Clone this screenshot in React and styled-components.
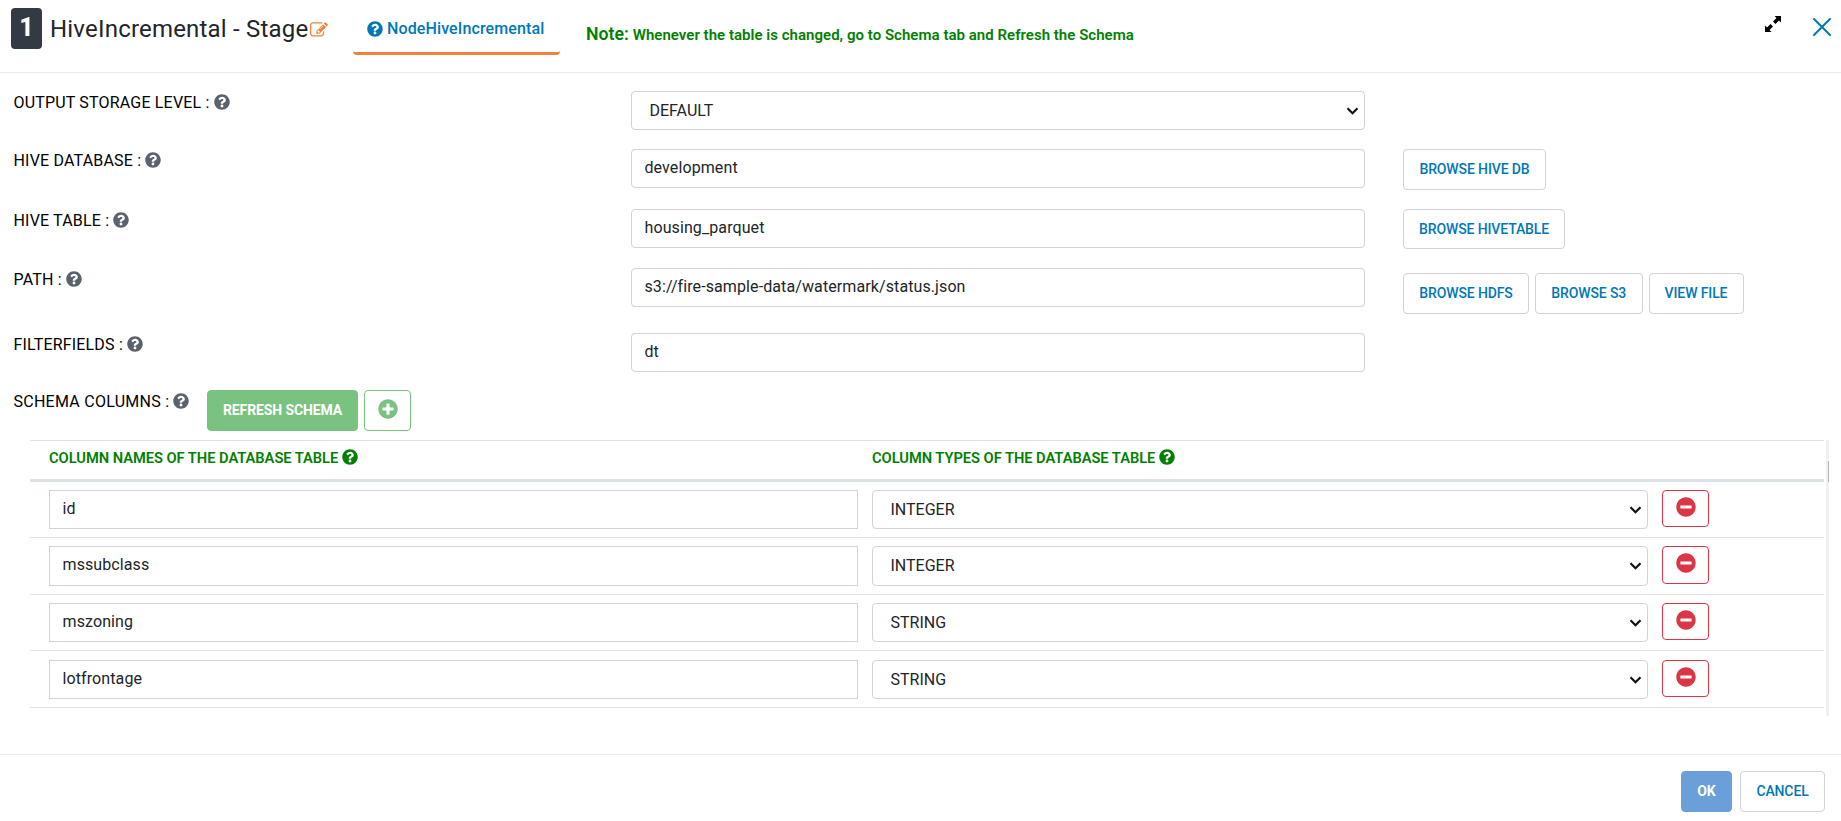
import React from "react";
import styled, { createGlobalStyle, css } from "styled-components";
import { FaQuestionCircle, FaPlusCircle, FaMinusCircle } from "react-icons/fa";

const GlobalStyle = createGlobalStyle`
  *, *::before, *::after { box-sizing: border-box; }
  body { margin: 0; background: #fff; }
  button, input, select { font: inherit; margin: 0; }
`;

const Dialog = styled.div`
  display: flex;
  flex-direction: column;
  height: 821px;
  overflow: hidden;
  background: #fff;
  color: #212529;
  font-family: Roboto, "Liberation Sans", sans-serif;
  font-size: 16px;
  line-height: 24px;
`;

const Header = styled.header`
  display: flex;
  align-items: flex-start;
  flex: none;
  height: 73px;
  padding: 8px 10px 0 11px;
  border-bottom: 1px solid #e9ebed;
`;

const StepBadge = styled.span`
  flex: none;
  width: 31px;
  height: 41px;
  border-radius: 4px;
  background: #343a43;
  color: #fff;
  font-size: 25px;
  font-weight: 800;
  line-height: 40px;
  text-align: center;
`;

const Title = styled.h4`
  flex: none;
  width: 258px;
  margin: 1px 0 0 8px;
  font-size: 24px;
  font-weight: 400;
  line-height: 40px;
  letter-spacing: 0.2px;
  white-space: nowrap;
`;

const EditIcon = styled.svg`
  flex: none;
  width: 18px;
  height: 18px;
  margin-top: 13px;
  margin-left: 2px;
  fill: #f0803c;
`;

const Tab = styled.a`
  display: flex;
  align-items: center;
  flex: none;
  gap: 4px;
  width: 207px;
  height: 47px;
  margin-left: 25px;
  padding: 0 0 2px 14px;
  border-bottom: 3px solid #f5813f;
  border-radius: 4px;
  color: #0078b8;
  font-weight: 500;
  letter-spacing: 0.12px;
  white-space: nowrap;
  svg { margin-bottom: 1px; }
`;

const Note = styled.p`
  flex: 1;
  margin: 14px 0 0 26px;
  color: #008000;
  font-size: 15px;
  font-weight: 600;
  letter-spacing: 0.03px;
  white-space: nowrap;
`;

const NoteLead = styled.span`
  font-size: 17.7px;
`;

const HeaderIcon = styled.svg`
  flex: none;
  width: ${(p) => p.$size}px;
  height: ${(p) => p.$size}px;
  margin-top: ${(p) => p.$top}px;
  margin-left: ${(p) => p.$gap || 0}px;
`;

const Form = styled.main`
  flex: 1;
  padding-top: 18px;
`;

const FieldRow = styled.div`
  display: grid;
  grid-template-columns: 617.5px 734px 1fr;
  align-items: start;
  height: ${(p) => p.$height}px;
  padding-left: 13.5px;
`;

const Label = styled.label`
  display: flex;
  align-items: center;
  gap: 4px;
  height: 24px;
  color: #000;
  letter-spacing: 0.18px;
  white-space: nowrap;
  svg { color: #5a636d; margin-bottom: 3px; }
`;

const control = css`
  display: block;
  width: 100%;
  height: ${(p) => p.$height || 39}px;
  border: 1px solid #ced4da;
  background: #fff;
  color: #212529;
  outline: none;
`;

const TextInput = styled.input`
  ${control}
  padding: 0 12.5px 3px;
  border-radius: ${(p) => (p.$square ? 0 : 4)}px;
  letter-spacing: 0.1px;
`;

const SelectWrap = styled.div`
  ${control}
  display: flex;
  align-items: center;
  justify-content: space-between;
  padding: 0 5px 0 17.5px;
  border-radius: 4px;
`;

const Chevron = styled.svg`
  width: 13px;
  height: 8px;
  fill: none;
  stroke: #111;
  stroke-width: 2.2;
`;

const Actions = styled.div`
  display: flex;
  gap: 6px;
  padding: ${(p) => p.$top || 0}px 0 0 38px;
`;

const Button = styled.button`
  flex: none;
  display: flex;
  align-items: center;
  justify-content: center;
  width: ${(p) => p.$width}px;
  height: ${(p) => p.$height || 41}px;
  padding: 0 0 ${(p) => (p.$height === 40 ? 0 : 2)}px;
  border: 1px solid ${(p) => p.$border || "#ced4da"};
  border-radius: 4px;
  background: ${(p) => p.$fill || "#fff"};
  color: ${(p) => p.$color || "#0078b8"};
  font-size: 14px;
  font-weight: ${(p) => (p.$fill ? 700 : 500)};
  letter-spacing: -0.12px;
  white-space: nowrap;
  svg { margin-bottom: 2px; }
`;

const SchemaBar = styled.div`
  display: flex;
  align-items: flex-start;
  gap: 6px;
  height: 50px;
  padding-left: 13.5px;
`;

const SchemaLabel = styled(Label)`
  width: 187.5px;
  letter-spacing: 0.26px;
`;

const TableScroller = styled.div`
  display: flex;
  gap: 2px;
  height: 276px;
  padding-left: 30px;
`;

const Table = styled.div`
  width: 1794px;
`;

const TableHead = styled.div`
  display: grid;
  grid-template-columns: 823px 1fr;
  height: 42px;
  padding: 5px 0 0 19px;
  border-top: 1px solid #dee2e6;
  border-bottom: 3px solid #dee2e6;
`;

const HeadCell = styled.span`
  display: flex;
  align-items: center;
  gap: 4px;
  height: 24px;
  color: #008000;
  font-size: 14.7px;
  font-weight: 600;
  letter-spacing: -0.04px;
  white-space: nowrap;
  svg { margin-bottom: 2px; }
`;

const TableRow = styled.div`
  display: grid;
  grid-template-columns: 809px 776px 47px;
  column-gap: 14px;
  height: ${(p) => p.$height}px;
  padding: ${(p) => p.$top || 8}px 0 0 19px;
  border-bottom: 1px solid #dee2e6;
`;

const ScrollTrack = styled.div`
  display: flex;
  justify-content: flex-end;
  width: 3px;
  padding-top: 21px;
  background: #f0f0f0;
`;

const ScrollThumb = styled.div`
  width: 1px;
  height: 21px;
  background: #b4b4b4;
`;

const Footer = styled.footer`
  display: flex;
  justify-content: flex-end;
  gap: 8px;
  flex: none;
  height: 67px;
  padding: 16px 16px 0 0;
  border-top: 1px solid #e9ecef;
`;

const fields = [
  { label: "OUTPUT STORAGE LEVEL :", value: "DEFAULT", select: true, height: 58 },
  { label: "HIVE DATABASE :", value: "development", height: 60, actions: [["BROWSE HIVE DB", 143]] },
  { label: "HIVE TABLE :", value: "housing_parquet", height: 59, actions: [["BROWSE HIVETABLE", 162]], buttonHeight: 40 },
  {
    label: "PATH :",
    value: "s3://fire-sample-data/watermark/status.json",
    height: 65,
    actionsTop: 5,
    actions: [["BROWSE HDFS", 126], ["BROWSE S3", 107.5], ["VIEW FILE", 95]],
  },
  { label: "FILTERFIELDS :", value: "dt", height: 57 },
];

const columns = [
  { name: "id", type: "INTEGER", height: 56 },
  { name: "mssubclass", type: "INTEGER", height: 57, control: 40, button: 38 },
  { name: "mszoning", type: "STRING", height: 56 },
  { name: "lotfrontage", type: "STRING", height: 57, top: 9 },
];

function Select({ value, height }) {
  return (
    <SelectWrap role="combobox" $height={height}>
      <span>{value}</span>
      <Chevron viewBox="0 0 13 8">
        <path d="M1.5 1.2 6.5 6.2 11.5 1.2" />
      </Chevron>
    </SelectWrap>
  );
}

export default function App() {
  return (
    <Dialog>
      <GlobalStyle />
      <Header>
        <StepBadge>1</StepBadge>
        <Title>HiveIncremental - Stage</Title>
        <EditIcon viewBox="0 0 1792 1792">
          <path d="M888 1184l116-116-152-152-116 116v56h96v96h56zm440-720q-16-16-33 1l-350 350q-17 17-1 33t33-1l350-350q17-17 1-33zm80 594v190q0 119-84.500 203.500t-203.500 84.500h-832q-119 0-203.500-84.500t-84.500-203.500v-832q0-119 84.500-203.500t203.500-84.500h832q63 0 117 25 15 7 18 23 3 17-9 29l-49 49q-14 14-32 8-23-6-45-6h-832q-66 0-113 47t-47 113v832q0 66 47 113t113 47h832q66 0 113-47t47-113v-126q0-13 9-22l64-64q15-15 35-7t20 29zm-96-738l288 288-672 672h-288v-288zm444 132l-92 92-288-288 92-92q28-28 68-28t68 28l152 152q28 28 28 68t-28 68z" />
        </EditIcon>
        <Tab>
          <FaQuestionCircle size={16} />
          NodeHiveIncremental
        </Tab>
        <Note>
          <NoteLead>Note:</NoteLead> Whenever the table is changed, go to Schema tab and Refresh the Schema
        </Note>
        <HeaderIcon $size={16} $top={8} viewBox="0 0 16 16">
          <path d="M9.500 0H16v6.500l-2-2-3.500 3.500-2.500-2.500L11.500 2zM0 16V9.500l2 2L5.500 8 8 10.500 4.500 14l2 2z" />
        </HeaderIcon>
        <HeaderIcon $size={18} $top={10} $gap={32} viewBox="0 0 18 18">
          <path d="M1 1 17 17M17 1 1 17" stroke="#0078b0" strokeWidth="2" strokeLinecap="round" />
        </HeaderIcon>
      </Header>
      <Form>
        {fields.map((f) => (
          <FieldRow key={f.label} $height={f.height}>
            <Label>
              {f.label}
              <FaQuestionCircle size={16} />
            </Label>
            {f.select ? <Select value={f.value} /> : <TextInput defaultValue={f.value} />}
            {f.actions && (
              <Actions $top={f.actionsTop}>
                {f.actions.map(([text, width]) => (
                  <Button key={text} $width={width} $height={f.buttonHeight}>{text}</Button>
                ))}
              </Actions>
            )}
          </FieldRow>
        ))}
        <SchemaBar>
          <SchemaLabel>
            SCHEMA COLUMNS :
            <FaQuestionCircle size={16} />
          </SchemaLabel>
          <Button $width={151} $fill="#7ac27f" $border="#7ac27f" $color="#fff">REFRESH SCHEMA</Button>
          <Button $width={47} $border="#7ac27f" $color="#7ac27f"><FaPlusCircle size={20} /></Button>
        </SchemaBar>
        <TableScroller>
          <Table>
            <TableHead>
              <HeadCell>COLUMN NAMES OF THE DATABASE TABLE <FaQuestionCircle size={16} /></HeadCell>
              <HeadCell>COLUMN TYPES OF THE DATABASE TABLE <FaQuestionCircle size={16} /></HeadCell>
            </TableHead>
            {columns.map((c) => (
              <TableRow key={c.name} $height={c.height} $top={c.top}>
                <TextInput $square $height={c.control} defaultValue={c.name} />
                <Select value={c.type} height={c.control} />
                <Button $width={47} $height={c.button || 37} $border="#dc3545" $color="#dc3545"><FaMinusCircle size={20} /></Button>
              </TableRow>
            ))}
          </Table>
          <ScrollTrack><ScrollThumb /></ScrollTrack>
        </TableScroller>
      </Form>
      <Footer>
        <Button $width={51} $fill="#6a9fd9" $border="#6a9fd9" $color="#fff">OK</Button>
        <Button $width={85}>CANCEL</Button>
      </Footer>
    </Dialog>
  );
}
